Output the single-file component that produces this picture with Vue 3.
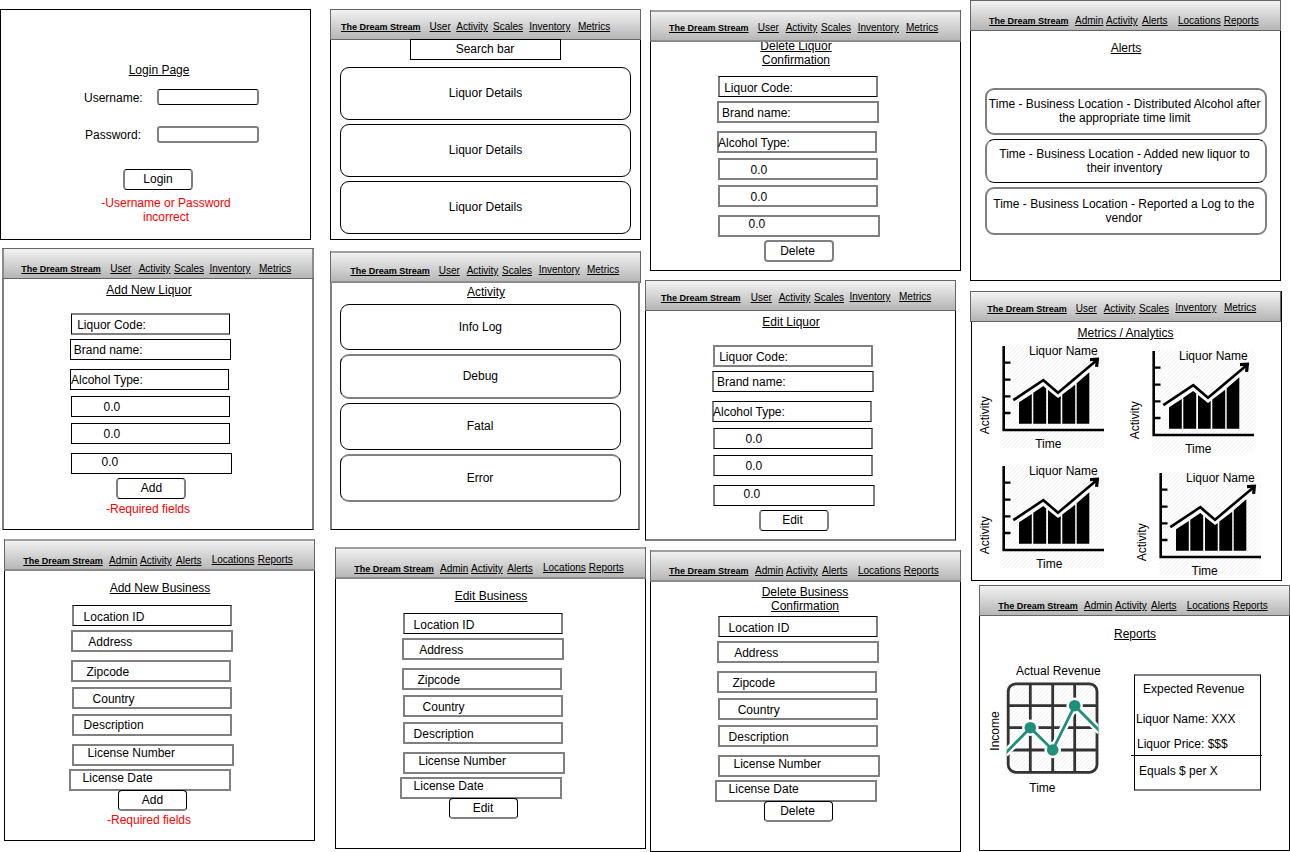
<script setup>
const userLinks = ['The Dream Stream', 'User', 'Activity', 'Scales', 'Inventory', 'Metrics']
const adminLinks = ['The Dream Stream', 'Admin', 'Activity', 'Alerts', 'Locations', 'Reports']

// Node builders. Coordinates are canvas coordinates of the diagram.
// Edge styles: '' crisp, 'h' soft top/bottom, 'v' soft sides, 'hv' soft all round.
const field = (x, y, r, b, label, tx, cy, soft = '') => ({ kind: 'field', x, y, w: r - x, h: b - y, label, tx, cy, soft })
const button = (x, y, r, b, label, cx, cy, soft = '') => ({ kind: 'button', x, y, w: r - x, h: b - y, label, cx, cy, soft })
const card = (x, y, r, b, label, cx, cy, soft = '') => ({ kind: 'card', x, y, w: r - x, h: b - y, label, cx, cy, soft })
const heading = (label, cx, cy) => ({ kind: 'heading', x: cx - 100, y: cy - 7, w: 200, h: 14, label, cx, cy, soft: '' })
const error = (label, cx, cy) => ({ kind: 'error', x: cx - 100, y: cy - 7, w: 200, h: 14, label, cx, cy, soft: '' })

const panels = [
  { id: 'login', type: 'login', x: 0, y: 9, r: 311, b: 240, soft: '', items: [] },
  {
    id: 'search', x: 330, y: 9, r: 641, b: 240, soft: '',
    nav: { links: userLinks, xs: [341, 429.6, 456.3, 493, 529.3, 578], cy: 27, lift: 0, b: 40, soft: '' },
    items: [
      { ...card(410, 39, 561, 60, 'Search bar', 485, 49), kind: 'field' },
      card(340, 67, 631, 120, 'Liquor Details', 485.5, 93),
      card(340, 124, 631, 177, 'Liquor Details', 485.5, 150),
      card(340, 181, 631, 234, 'Liquor Details', 485.5, 207),
    ],
  },
  {
    id: 'delete-liquor', x: 650, y: 10, r: 961, b: 271, soft: '',
    nav: { links: userLinks, xs: [669, 757.7, 785.7, 821, 857.7, 906], cy: 28, lift: 0, b: 42, soft: 'h', over: true },
    items: [
      heading('Delete Liquor\nConfirmation', 796, 46),
      field(718, 76, 878, 97, 'Liquor Code:', 724.2, 88, 'v'),
      field(717, 101, 879, 123, 'Brand name:', 722, 113, 'hv'),
      field(717, 131, 877, 153, 'Alcohol Type:', 718, 143, 'hv'),
      field(718, 158, 878, 180, '0.0', 750.6, 170, 'hv'),
      field(718, 185, 878, 207, '0.0', 750.6, 197, 'hv'),
      field(718, 215, 880, 237, '0.0', 748.6, 224, 'hv'),
      button(764, 240, 834, 262, 'Delete', 797.5, 251, 'hv'),
    ],
  },
  {
    id: 'alerts', x: 970, y: 0, r: 1281, b: 281, soft: '',
    nav: { links: adminLinks, xs: [989, 1075, 1106, 1142, 1178, 1223.7], cy: 21, lift: 0, b: 31, soft: '' },
    items: [
      heading('Alerts', 1126, 48),
      card(985, 88, 1267, 135, 'Time - Business Location - Distributed Alcohol after\nthe appropriate time limit', 1124.7, 104, 'hv'),
      card(985, 139, 1267, 183, 'Time - Business Location - Added new liquor to\ntheir inventory', 1124.5, 154, 'v'),
      card(985, 187, 1267, 235, 'Time - Business Location - Reported a Log to the\nvendor', 1123.8, 204, 'hv'),
    ],
  },
  {
    id: 'add-liquor', x: 2, y: 248, r: 314, b: 530, soft: 'v',
    nav: { links: userLinks, xs: [21.3, 110.3, 138.7, 174, 209.5, 259], cy: 269, lift: 0, b: 279, soft: 'v' },
    items: [
      heading('Add New Liquor', 149, 290),
      field(71, 313, 230, 335, 'Liquor Code:', 77.2, 325, 'h'),
      field(70, 339, 231, 360, 'Brand name:', 73.8, 350),
      field(70, 369, 229, 390, 'Alcohol Type:', 71, 380),
      field(71, 396, 230, 417, '0.0', 103.6, 407),
      field(71, 423, 230, 444, '0.0', 103.6, 434),
      field(71, 453, 232, 474, '0.0', 101.6, 462),
      button(116, 478, 186, 499, 'Add', 151.5, 488, 'v'),
      error('-Required fields', 148, 509),
    ],
  },
  {
    id: 'activity', x: 330, y: 251, r: 640, b: 530, soft: 'v',
    nav: { links: userLinks, xs: [350.3, 438.7, 466.7, 502, 538.7, 587], cy: 271, lift: 1, b: 283, soft: 'h', extra: 1 },
    items: [
      heading('Activity', 486, 292),
      card(340, 304, 621, 350, 'Info Log', 480.3, 327),
      card(340, 354, 621, 399, 'Debug', 480.3, 376, 'h'),
      card(340, 403, 621, 450, 'Fatal', 480, 426),
      card(340, 454, 621, 502, 'Error', 480, 478, 'h'),
    ],
  },
  {
    id: 'edit-liquor', x: 645, y: 280, r: 956, b: 541, soft: 'b',
    nav: { links: userLinks, xs: [661, 750.7, 778.7, 814, 849.5, 899], cy: 298, lift: 1, b: 311, soft: '' },
    items: [
      heading('Edit Liquor', 791, 322),
      field(713, 345, 873, 367, 'Liquor Code:', 719.2, 357, 'hv'),
      field(712, 371, 874, 392, 'Brand name:', 717, 382, 'v'),
      field(712, 401, 872, 422, 'Alcohol Type:', 713, 412, 'v'),
      field(713, 428, 873, 449, '0.0', 745.6, 439, 'v'),
      field(713, 455, 873, 476, '0.0', 745.6, 466, 'v'),
      field(713, 485, 875, 506, '0.0', 743.6, 494, 'v'),
      button(759, 510, 829, 531, 'Edit', 792.5, 520, 'v'),
    ],
  },
  {
    id: 'metrics', type: 'metrics', x: 971, y: 291, r: 1282, b: 581, soft: '',
    nav: { links: userLinks, xs: [987.3, 1075.7, 1103.7, 1139, 1175.3, 1224], cy: 309, lift: 1, b: 322, soft: '', shift: -1 },
    items: [heading('Metrics / Analytics', 1125.5, 333)],
  },
  {
    id: 'add-business', x: 4, y: 539, r: 315, b: 841, soft: '',
    nav: { links: adminLinks, xs: [23.3, 109, 140, 176, 211.7, 257.7], cy: 561, lift: 1, b: 571, soft: 'h' },
    items: [
      heading('Add New Business', 160, 588),
      field(72, 605, 232, 626, 'Location ID', 83.6, 617, 'v'),
      field(71, 630, 233, 652, 'Address', 88.3, 642, 'hv'),
      field(71, 660, 231, 682, 'Zipcode', 86.5, 672, 'hv'),
      field(72, 687, 232, 709, 'Country', 92.6, 699, 'hv'),
      field(72, 714, 232, 736, 'Description', 83.6, 725, 'hv'),
      field(72, 744, 234, 766, 'License Number', 87.6, 753, 'hv'),
      field(69, 769, 231, 791, 'License Date', 82.6, 778, 'hv'),
      button(118, 790, 187, 811, 'Add', 152.5, 800, 'b'),
      error('-Required fields', 149, 820),
    ],
  },
  {
    id: 'edit-business', x: 335, y: 547, r: 646, b: 849, soft: '',
    nav: { links: adminLinks, xs: [354.3, 440, 471, 507.3, 543, 588.7], cy: 569, lift: 1, b: 579, soft: 'h' },
    items: [
      heading('Edit Business', 491, 596),
      field(403, 613, 563, 634, 'Location ID', 413.6, 625, 'v'),
      field(402, 638, 564, 660, 'Address', 419.2, 650, 'hv'),
      field(402, 668, 562, 690, 'Zipcode', 417.4, 680, 'hv'),
      field(403, 695, 563, 717, 'Country', 422.6, 707, 'hv'),
      field(403, 722, 563, 744, 'Description', 413.6, 734, 'hv'),
      field(403, 752, 565, 774, 'License Number', 418.5, 761, 'hv'),
      field(400, 777, 562, 799, 'License Date', 413.6, 786, 'hv'),
      button(449, 798, 518, 819, 'Edit', 483, 808, 'b'),
    ],
  },
  {
    id: 'delete-business', x: 650, y: 550, r: 961, b: 852, soft: '',
    nav: { links: adminLinks, xs: [669, 755, 786, 822, 858, 903.7], cy: 571, lift: 0, b: 582, soft: 'h' },
    items: [
      heading('Delete Business\nConfirmation', 805, 592),
      field(718, 616, 878, 637, 'Location ID', 728.6, 628, 'v'),
      field(717, 641, 879, 663, 'Address', 734.2, 653, 'hv'),
      field(717, 671, 877, 693, 'Zipcode', 732.4, 683, 'hv'),
      field(718, 698, 878, 720, 'Country', 737.7, 710, 'hv'),
      field(718, 725, 878, 747, 'Description', 728.6, 737, 'hv'),
      field(718, 755, 880, 777, 'License Number', 733.5, 764, 'hv'),
      field(715, 780, 877, 802, 'License Date', 728.6, 789, 'hv'),
      button(764, 801, 833, 822, 'Delete', 797.5, 811, 'b'),
    ],
  },
  {
    id: 'reports', type: 'reports', x: 979, y: 585, r: 1290, b: 851, soft: '',
    nav: { links: adminLinks, xs: [998.3, 1084, 1115, 1151, 1186.7, 1232.7], cy: 606, lift: 0, b: 616, soft: '' },
    items: [heading('Reports', 1135, 634)],
  },
]

const charts = [{ timeX: 60.2 }, { timeX: 60.2 }, { timeX: 61.2 }, { timeX: 59.5 }]

const px = (n) => `${n}px`

const panelStyle = (p) => ({ left: px(p.x), top: px(p.y), width: px(p.r - p.x), height: px(p.b - p.y) })

const navStyle = (p) => {
  const n = p.nav
  const left = p.x + (n.shift || 0)
  return {
    height: px(n.b - p.y),
    marginLeft: px(n.shift || 0),
    width: px(p.r - p.x + (n.extra || 0)),
    paddingLeft: px(n.xs[0] - left),
    paddingTop: px(n.cy - 6 - p.y),
    gridTemplateColumns: n.xs.slice(1).map((x, i) => px(x - n.xs[i])).join(' ') + ' auto',
  }
}

// Each node follows the previous one; the gap between them is its top margin.
const itemStyle = (p, i) => {
  const it = p.items[i]
  const prev = i ? p.items[i - 1] : null
  const above = prev ? prev.y + prev.h : p.nav.b
  return { marginTop: px(it.y - above), marginLeft: px(it.x - p.x), width: px(it.w), height: px(it.h) }
}

const textStyle = (it) => ({
  marginTop: px(it.cy - 7 - it.y),
  marginLeft: px(it.cx === undefined ? it.tx - it.x : it.cx - it.x - 150),
})
</script>

<template>
  <main class="canvas">
    <section v-for="p in panels" :key="p.id" class="panel" :style="panelStyle(p)">
      <div class="frame" :class="p.soft && 'soft-' + p.soft"></div>

      <nav v-if="p.nav" class="nav" :class="[p.nav.soft && 'nav-' + p.nav.soft, { over: p.nav.over }]" :style="navStyle(p)">
        <a
          v-for="(link, i) in p.nav.links"
          :key="link"
          :class="{ brand: i === 0, lifted: i > 3 && p.nav.lift }"
        ><span>{{ link }}</span></a>
      </nav>

      <div
        v-for="(it, i) in p.items"
        :key="i"
        class="shape"
        :class="[it.kind, it.soft && 'soft-' + it.soft]"
        :style="itemStyle(p, i)"
      >
        <span class="text" :class="{ centered: it.cx !== undefined }" :style="textStyle(it)">{{ it.label }}</span>
      </div>

      <form v-if="p.type === 'login'" class="login" @submit.prevent>
        <h2>Login Page</h2>
        <div class="row first"><label>Username:</label><div class="input"></div></div>
        <div class="row second"><label>Password:</label><div class="input tall"></div></div>
        <button type="button">Login</button>
        <p>-Username or Password<br />incorrect</p>
      </form>

      <div v-if="p.type === 'metrics'" class="charts">
        <svg v-for="(c, i) in charts" :key="i" :class="'chart chart-' + i" width="132" height="110" viewBox="0 0 132 110">
          <defs>
            <pattern :id="'hatch' + i" width="4" height="4" patternUnits="userSpaceOnUse">
              <path d="M0 4L4 0" stroke="#f1f1f1" stroke-width="1" />
            </pattern>
          </defs>
          <rect x="26.5" y="1" width="102.5" height="103" :fill="`url(#hatch${i})`" />
          <path d="M28.7 2V86H129" fill="none" stroke="#000" stroke-width="2.6" />
          <path d="M29 18.7H35.5M29 35.7H35.5M29 52.3H35.5M29 69H35.5" stroke="#000" stroke-width="2.3" />
          <g fill="#000">
            <path d="M44 79.8V58.3L56.8 50V79.8Z" />
            <path d="M58.3 79.8V48.8L68.3 42L71.2 44.4V79.8Z" />
            <path d="M73 79.8V46L83 53.9L85.7 52V79.8Z" />
            <path d="M87.3 79.8V50.5L100.2 40.7V79.8Z" />
            <path d="M101.7 79.8V39.3L114.3 28.3V79.8Z" />
          </g>
          <path d="M38.3 56.2L68.3 36.2L83 48.7L122 16" fill="none" stroke="#000" stroke-width="2.6" />
          <path d="M115 15.6L122.4 15.2L121.6 22.8" fill="none" stroke="#000" stroke-width="3.2" />
          <text x="54" y="11">Liquor Name</text>
          <text :x="c.timeX" y="104">Time</text>
          <text transform="translate(14 71.3) rotate(-90)" text-anchor="middle">Activity</text>
        </svg>
      </div>

      <div v-if="p.type === 'reports'" class="report">
        <svg width="120" height="132" viewBox="0 0 120 132">
          <defs>
            <pattern id="hatch-report" width="4" height="4" patternUnits="userSpaceOnUse">
              <path d="M0 4L4 0" stroke="#f1f1f1" stroke-width="1" />
            </pattern>
            <clipPath id="plot"><rect x="21.7" y="15" width="91.6" height="97" /></clipPath>
          </defs>
          <rect x="20" y="17" width="95" height="94" fill="url(#hatch-report)" />
          <g fill="none" stroke="#333" stroke-width="2.8">
            <rect x="23.2" y="19.9" width="88.8" height="88.4" rx="7.5" />
            <path d="M45.3 20V108M67.7 20V108M89.7 20V108M23 41.7H112M23 63.7H112M23 86H112" />
          </g>
          <g clip-path="url(#plot)">
            <path d="M20 89.7L45.3 63.7L67.7 86L89.7 41.7L115 67.3" fill="none" stroke="#fff" stroke-width="7.5" />
            <g fill="#fff"><circle cx="45.3" cy="63.7" r="8.3" /><circle cx="67.7" cy="86" r="8.3" /><circle cx="89.7" cy="41.7" r="8.3" /></g>
            <path d="M20 89.7L45.3 63.7L67.7 86L89.7 41.7L115 67.3" fill="none" stroke="#1f8f7b" stroke-width="2.8" />
            <g fill="#1f8f7b"><circle cx="45.3" cy="63.7" r="5.8" /><circle cx="67.7" cy="86" r="5.8" /><circle cx="89.7" cy="41.7" r="5.8" /></g>
          </g>
          <text x="31" y="11">Actual Revenue</text>
          <text x="44.3" y="128">Time</text>
          <text transform="translate(14.3 67) rotate(-90)" text-anchor="middle">Income</text>
        </svg>
        <div class="expected">
          <p class="line-a">Expected Revenue</p>
          <p class="line-b">Liquor Name: XXX</p>
          <p class="line-c">Liquor Price: $$$</p>
          <hr />
          <p class="line-d">Equals $ per X</p>
        </div>
      </div>
    </section>
  </main>
</template>

<style>
body {
  margin: 0;
  background: #fff;
}
</style>

<style scoped>
.canvas {
  position: relative;
  width: 1290px;
  height: 852px;
  overflow: hidden;
  background: #fff;
  color: #000;
  font: 12px/14px "Liberation Sans", Arial, Helvetica, sans-serif;
}
.canvas * {
  box-sizing: border-box;
}
.panel {
  position: absolute;
  display: flow-root;
}
.frame {
  position: absolute;
  inset: 0;
  border: 1px solid #000;
  background: #fff;
}
.nav {
  position: relative;
  display: grid;
  align-items: start;
  background: linear-gradient(#f5f5f5, #b3b3b3);
  box-shadow: inset 0 0 0 1px #666;
  font-size: 10px;
  line-height: 12px;
  white-space: nowrap;
}
.nav.over {
  z-index: 1;
}
.nav-h {
  box-shadow: inset 1px 0 #666, inset -1px 0 #666, inset 0 2px #a0a0a0, inset 0 -2px #8c8c8c;
}
.nav-v {
  box-shadow: inset 0 1px #666, inset 0 -1px #666, inset 2px 0 #8c8c8c, inset -2px 0 #8c8c8c;
}
.nav a {
  text-decoration: underline;
}
.nav .brand {
  font-size: 9px;
  font-weight: 700;
}
.nav .lifted {
  margin-top: -1px;
}
.shape {
  position: relative;
  display: flex;
  align-items: flex-start;
}
.text {
  flex: none;
  white-space: pre;
}
.centered {
  width: 300px;
  text-align: center;
}
.field,
.button,
.card {
  border: 1px solid #000;
}
.button {
  border-radius: 4px;
}
.card {
  border-radius: 9px;
}
.field > .text,
.button > .text,
.card > .text {
  transform: translate(-1px, -1px);
}
.soft-h {
  border-top: 2px solid #808080;
  border-bottom: 2px solid #808080;
}
.soft-v {
  border-left: 2px solid #808080;
  border-right: 2px solid #808080;
}
.soft-hv {
  border: 2px solid #808080;
}
.soft-b {
  border-bottom: 2px solid #808080;
}
.soft-h > .text {
  transform: translate(-1px, -2px);
}
.soft-v > .text {
  transform: translate(-2px, -1px);
}
.soft-hv > .text {
  transform: translate(-2px, -2px);
}
.heading .text {
  text-decoration: underline;
}
.error {
  color: #f00;
}

.login {
  position: relative;
  display: flex;
  flex-direction: column;
  align-items: flex-start;
  padding-top: 54px;
}
.login h2 {
  margin: 0 0 0 128.7px;
  font-size: 12px;
  font-weight: 400;
  text-decoration: underline;
}
.row {
  display: flex;
  align-items: flex-start;
  margin-left: 84px;
}
.row label {
  width: 73px;
  padding-top: 2px;
}
.first {
  margin-top: 12px;
}
.second {
  margin-top: 21px;
}
.second label {
  padding-left: 1px;
}
.input {
  width: 102px;
  height: 16px;
  border: 1px solid #000;
  border-right: 2px solid #808080;
  border-left: 2px solid #808080;
  border-radius: 3px;
}
.input.tall {
  height: 17px;
  border: 2px solid #808080;
}
.login button {
  width: 70px;
  height: 21px;
  margin: 26px 0 0 123px;
  padding: 0 0 1px 0;
  border: 1px solid #000;
  border-right: 2px solid #808080;
  border-left: 2px solid #808080;
  border-radius: 4px;
  background: #fff;
  color: #000;
  font: inherit;
}
.login p {
  width: 200px;
  margin: 6px 0 0 66px;
  color: #f00;
  text-align: center;
}

svg {
  display: block;
  overflow: visible;
}
svg text {
  font: 12px "Liberation Sans", Arial, Helvetica, sans-serif;
  fill: #000;
}
.charts {
  position: relative;
  display: grid;
  grid-template: 120px 120px / 150px 150px;
  margin: 4px 0 0 4px;
}
.chart-1 {
  margin-top: 5px;
}
.chart-3 {
  margin: 7px 0 0 7px;
}

.report {
  position: relative;
  display: flex;
  align-items: flex-start;
  margin: 23px 0 0 6px;
}
.expected {
  width: 127px;
  height: 117px;
  margin: 10px 0 0 29px;
  padding-top: 6px;
  border: 1px solid #000;
  border-top: 2px solid #808080;
  border-bottom: 2px solid #808080;
}
.expected p {
  margin: 0;
}
.expected hr {
  width: 131px;
  height: 1px;
  margin: 4px 0 0 -4px;
  border: 0;
  background: #000;
}
.expected .line-a {
  padding-left: 8px;
}
.expected .line-b {
  margin-top: 16px;
  padding-left: 1px;
}
.expected .line-c {
  margin-top: 11px;
  padding-left: 2px;
}
.expected .line-d {
  margin-top: 8px;
  padding-left: 4px;
}
</style>
